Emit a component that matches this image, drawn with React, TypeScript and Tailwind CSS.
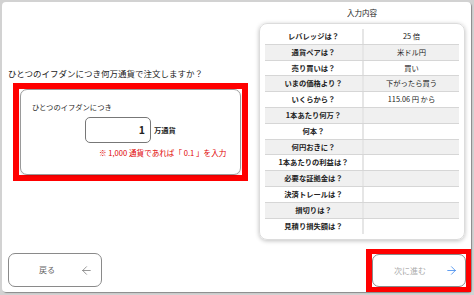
import React from "react";
import { ArrowLeft, ArrowRight } from "lucide-react";

const rows: [string, string][] = [
  ["レバレッジは？", "25 倍"],
  ["通貨ペアは？", "米ドル円"],
  ["売り買いは？", "買い"],
  ["いまの価格より？", "下がったら買う"],
  ["いくらから？", "115.06 円 から"],
  ["1本あたり何万？", ""],
  ["何本？", ""],
  ["何円おきに？", ""],
  ["1本あたりの利益は？", ""],
  ["必要な証拠金は？", ""],
  ["決済トレールは？", ""],
  ["損切りは？", ""],
  ["見積り損失額は？", ""],
];

const App = () => {
  return (
    <div className="w-[474px] h-[295px] bg-[#d2d2d2] pt-[2px] pl-[2px] pr-[3px] pb-[3px] font-['Noto_Sans_CJK_JP',sans-serif] text-[#222]">
      <div className="flex w-full h-full bg-white rounded-[4px] shadow-[1px_1px_1px_rgba(0,0,0,0.35)]">
        {/* left side */}
        <div className="w-[253px] flex flex-col">
          <p className="mt-[65px] ml-[6px] text-[8.5px] leading-[12px]">
            ひとつのイフダンにつき何万通貨で注文しますか？
          </p>
          <div className="mt-[4px] ml-[11px] w-[235px] h-[98px] border-[6px] border-[#ff0000] px-[1px]">
            <div className="h-full rounded-[7px] border border-[#9a9a9a] shadow-[0_1px_2px_rgba(0,0,0,0.15)] flex flex-col">
              <p className="mt-[11px] ml-[11px] text-[7.3px] leading-[12px]">ひとつのイフダンにつき</p>
              <div className="mt-[4px] ml-[64px] flex items-center">
                <div className="w-[66px] h-[26px] rounded-[5px] border border-[#777] flex items-center justify-end pr-[5px] text-[10.5px] font-bold">
                  1
                </div>
                <span className="ml-[3px] text-[7.3px] font-bold">万通貨</span>
              </div>
              <p className="mt-[4px] ml-[78px] text-[7.6px] leading-[12px] text-[#e00000]">
                ※ 1,000 通貨であれば「 0.1 」を入力
              </p>
            </div>
          </div>
          <button className="mt-auto mb-[5px] ml-[6px] w-[94px] h-[34px] rounded-[7px] border-[1.5px] border-[#8a8a8a] flex items-center justify-between pl-[30px] pr-[8px] text-[8px] text-[#666]">
            <span>戻る</span>
            <ArrowLeft size={13} strokeWidth={1.4} className="text-[#777]" />
          </button>
        </div>

        {/* right side */}
        <div className="flex-1 flex flex-col">
          <div className="ml-[4px] w-[206px]">
            <p className="mt-[4px] h-[13px] leading-[13px] text-center text-[7.5px]">入力内容</p>
            <div className="mt-[4px] h-[217px] rounded-[8px] border border-[#dcdcdc] shadow-[0_1px_4px_rgba(0,0,0,0.25)] pt-[5px] pl-[5px] pr-[5px]">
              {rows.map(([label, value], i) => (
                <div
                  key={label}
                  className={`grid grid-cols-2 h-[15.8px] text-[7.3px] ${i % 2 === 1 ? "bg-[#f0f0f0]" : "bg-white"} ${i < rows.length - 1 ? "border-b border-[#d6d6d6]" : ""}`}
                >
                  <div className="flex items-center justify-center font-bold">{label}</div>
                  <div className="flex items-center justify-center border-l-2 border-[#e6e6e6]">{value}</div>
                </div>
              ))}
            </div>
          </div>
          <div className="mt-[9px] self-end w-[105px] h-[43px] border-[5px] border-l-[6px] border-[#ff0000]">
            <button className="w-full h-full rounded-[7px] border-[1.5px] border-[#8a8a8a] flex items-center justify-between pl-[21px] pr-[7px] text-[8px] text-[#aaa]">
              <span>次に進む</span>
              <ArrowRight size={13} strokeWidth={1.4} className="text-[#2f80ed]" />
            </button>
          </div>
        </div>
      </div>
    </div>
  );
};

export default App;
